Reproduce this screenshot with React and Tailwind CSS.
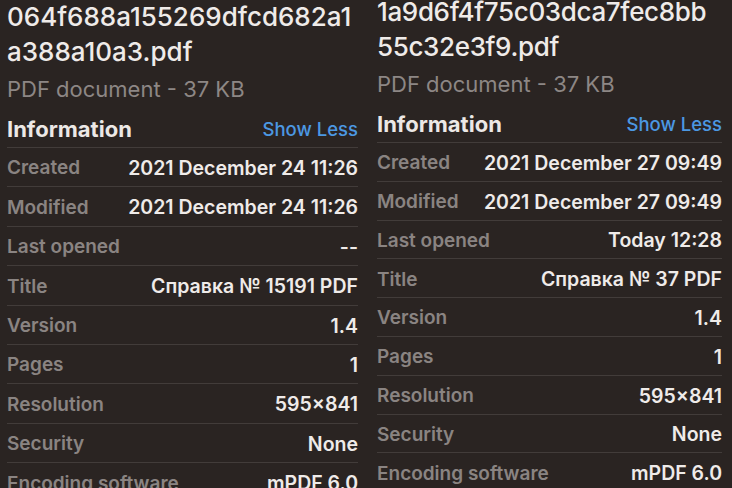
import React from "react";

const left = {
  name: ["064f688a155269dfcd682a1", "a388a10a3.pdf"],
  rows: [
    ["Created", "2021 December 24 11:26"],
    ["Modified", "2021 December 24 11:26"],
    ["Last opened", "--"],
    ["Title", "Справка № 15191 PDF"],
    ["Version", "1.4"],
    ["Pages", "1"],
    ["Resolution", "595×841"],
    ["Security", "None"],
    ["Encoding software", "mPDF 6.0"],
  ],
};

const right = {
  name: ["1a9d6f4f75c03dca7fec8bb", "55c32e3f9.pdf"],
  rows: [
    ["Created", "2021 December 27 09:49"],
    ["Modified", "2021 December 27 09:49"],
    ["Last opened", "Today 12:28"],
    ["Title", "Справка № 37 PDF"],
    ["Version", "1.4"],
    ["Pages", "1"],
    ["Resolution", "595×841"],
    ["Security", "None"],
    ["Encoding software", "mPDF 6.0"],
  ],
};

function Panel({ data, rowClass, className, titleClass }) {
  return (
    <div className={className}>
      {data.name.map((l) => (
        <div
          key={l}
          className={
            titleClass +
            " h-[35px] leading-[35px] text-[26px] font-medium text-[#efebe9] whitespace-nowrap"
          }
        >
          {l}
        </div>
      ))}
      <div className="h-[36px] pt-[2px] leading-[36px] text-[22px] text-[#8d8785]">
        PDF document - 37 KB
      </div>
      <div className="h-[42px] pt-[7px] flex items-center justify-between">
        <span className="text-[22px] font-bold text-[#ece8e6]">Information</span>
        <span className="text-[18.5px] font-medium text-[#4c98e2]">Show Less</span>
      </div>
      {data.rows.map(([k, v]) => (
        <div
          key={k}
          className={
            rowClass +
            " pt-[3px] flex items-center justify-between border-t border-[#423c3a] first:border-t-0"
          }
        >
          <span className="text-[19px] font-semibold text-[#8a8482]">{k}</span>
          <span className="text-[19.5px] font-semibold text-[#efebe9]">{v}</span>
        </div>
      ))}
    </div>
  );
}

export default function App() {
  return (
    <div
      className="w-[732px] h-[488px] overflow-hidden bg-[#2a2422] flex"
      style={{ fontFamily: "Inter, 'Noto Sans', sans-serif" }}
    >
      <Panel
        data={left}
        rowClass="h-[39.4px]"
        titleClass=""
        className="ml-[7px] w-[351px] mt-[-1px] shrink-0"
      />
      <Panel
        data={right}
        rowClass="h-[38.8px]"
        titleClass="tracking-[-0.35px]"
        className="ml-[19px] w-[345px] mt-[-6px] shrink-0"
      />
    </div>
  );
}
